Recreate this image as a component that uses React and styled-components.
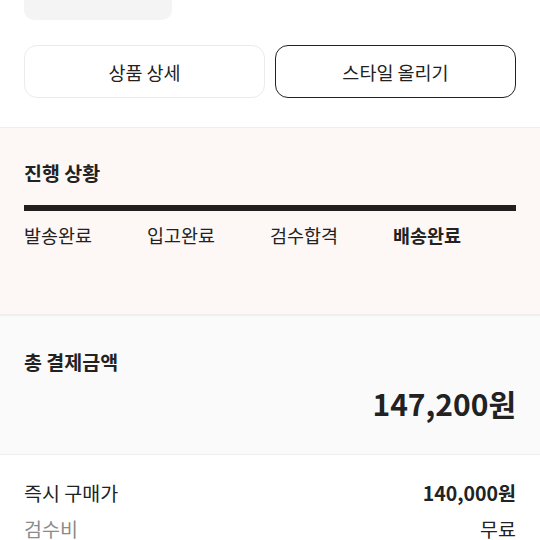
import React from 'react'
import styled, { createGlobalStyle } from 'styled-components'

const GlobalStyle = createGlobalStyle`
    html, body {
        margin: 0;
        padding: 0;
        background: #fff;
        font-family: "Noto Sans CJK KR", "Noto Sans", sans-serif;
        color: #222;
    }
`

const Page = styled.div`
    width: 540px;
    height: 540px;
    overflow: hidden;
`

const Top = styled.div`
    padding: 0 24px;
`

const Thumb = styled.div`
    width: 148px;
    height: 40px;
    margin-top: -20px;
    border-radius: 10px;
    background: #f4f4f4;
`

const Buttons = styled.div`
    display: grid;
    grid-template-columns: 1fr 1fr;
    gap: 10px;
    margin-top: 25px;
    padding-bottom: 29px;
`

const Button = styled.button`
    height: 53px;
    border-radius: 13px;
    border: 1px solid ${p => (p.$dark ? '#222' : '#ebebeb')};
    background: #fff;
    font-family: inherit;
    font-size: 18.5px;
    color: #222;
`

const Progress = styled.section`
    background: #fdf7f5;
    border-top: 1px solid #efefef;
    border-bottom: 2px solid #f0eeee;
    padding: 29px 24px 0;
    height: 157px;
`

const Title = styled.h3`
    margin: 0;
    font-size: 19.5px;
    font-weight: 700;
    line-height: 32px;
`

const Bar = styled.div`
    height: 6px;
    margin-top: 16px;
    background: #231f1e;
`

const Steps = styled.div`
    display: grid;
    grid-template-columns: repeat(4, 1fr);
    margin-top: 11px;
`

const Step = styled.span`
    font-size: 18.5px;
    line-height: 26px;
    font-weight: ${p => (p.$on ? 700 : 400)};
    color: #222;
`

const Total = styled.section`
    background: #fafafa;
    border-bottom: 1px solid #efefef;
    padding: 30px 24px 0;
    height: 108px;
`

const Amount = styled.div`
    text-align: right;
    font-size: 30px;
    font-weight: 700;
    line-height: 40px;
    margin-top: 5px;
`

const Details = styled.section`
    padding: 19px 24px 0;
`

const Row = styled.div`
    display: flex;
    justify-content: space-between;
    align-items: center;
    height: 36px;
    font-size: 19.5px;
    color: ${p => (p.$muted ? '#8b8b8b' : '#222')};
`

const Value = styled.span`
    font-weight: ${p => (p.$bold ? 700 : 400)};
    color: #222;
`

const steps = ['발송완료', '입고완료', '검수합격', '배송완료']

const App = () => {

    return (
        <React.Fragment>
            <GlobalStyle />
            <Page>
                <Top>
                    <Thumb />
                    <Buttons>
                        <Button>상품 상세</Button>
                        <Button $dark>스타일 올리기</Button>
                    </Buttons>
                </Top>

                <Progress>
                    <Title>진행 상황</Title>
                    <Bar />
                    <Steps>
                        {steps.map((s, i) => (
                            <Step key={s} $on={i === steps.length - 1}>{s}</Step>
                        ))}
                    </Steps>
                </Progress>

                <Total>
                    <Title>총 결제금액</Title>
                    <Amount>147,200원</Amount>
                </Total>

                <Details>
                    <Row>
                        <span>즉시 구매가</span>
                        <Value $bold>140,000원</Value>
                    </Row>
                    <Row $muted>
                        <span>검수비</span>
                        <Value>무료</Value>
                    </Row>
                </Details>
            </Page>
        </React.Fragment>
    )
}

export default App
